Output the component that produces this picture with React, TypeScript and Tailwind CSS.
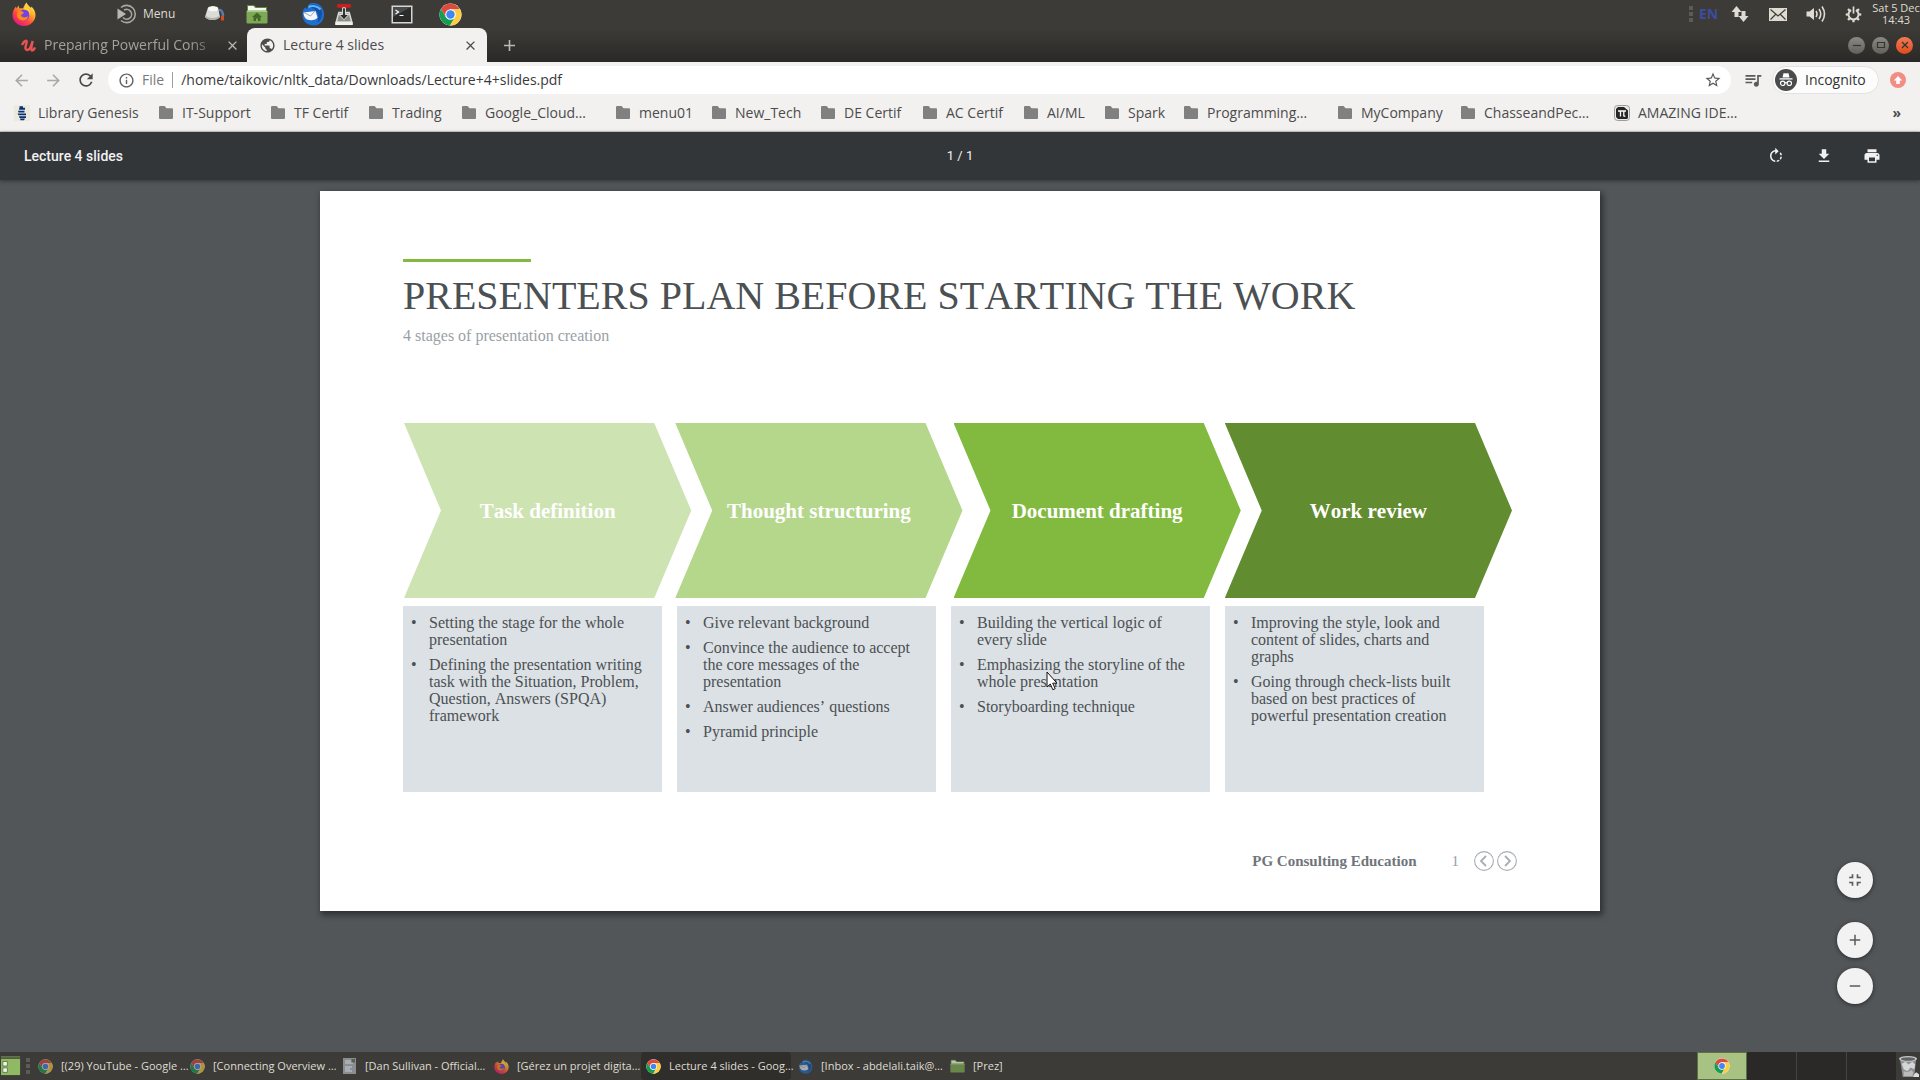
import React, { useId } from "react";
import {
  MdArrowBack,
  MdArrowForward,
  MdRefresh,
  MdInfoOutline,
  MdStarBorder,
  MdQueueMusic,
  MdRotateRight,
  MdFileDownload,
  MdPrint,
  MdFullscreenExit,
  MdAdd,
  MdRemove,
  MdClose,
  MdPublic,
} from "react-icons/md";

type IconProps = { className?: string };

function ChromeLogo({ className }: IconProps) {
  return (
    <svg viewBox="0 0 48 48" className={className} aria-hidden="true">
      <circle cx="24" cy="24" r="23" fill="#fff" />
      <path d="M24 13H43.9A23 23 0 0 0 4.1 12.5L14.5 29.5 24 13Z" fill="#dd4b3e" />
      <path d="M4.1 12.5A23 23 0 0 0 23 47L33.5 29.5 14.5 29.5Z" fill="#179c53" />
      <path d="M43.9 13A23 23 0 0 1 23 47L33.5 29.5 24 13Z" fill="#ffcd42" />
      <circle cx="24" cy="24" r="11" fill="#fff" />
      <circle cx="24" cy="24" r="8.8" fill="#4285f4" />
    </svg>
  );
}

function FirefoxLogo({ className }: IconProps) {
  const id = useId();
  return (
    <svg viewBox="0 0 48 48" className={className} aria-hidden="true">
      <defs>
        <linearGradient id={id} x1="0.85" y1="0.05" x2="0.2" y2="0.95">
          <stop offset="0" stopColor="#fff44f" />
          <stop offset="0.35" stopColor="#ffa92c" />
          <stop offset="0.65" stopColor="#ff4b3a" />
          <stop offset="1" stopColor="#e31587" />
        </linearGradient>
      </defs>
      <path
        d="M29 1c2 5 6 7 9 11l1-3c5 5 8 11 8 17a23 22 0 0 1-46 0C1 19 4 13 8 9l1 4 4-6 2 6c3-1 5 0 7 0 2-4 3-8 7-12Z"
        fill={`url(#${id})`}
      />
      <circle cx="24" cy="26" r="11" fill="#7542e5" />
      <path d="M12 18c5-1 9 1 12 4l-6 4c1 5 8 7 14 2 0 6-5 9-10 9-8 0-13-6-12-13Z" fill="#ff8a16" />
      <path d="M24 15c8-1 13 6 11 14 4-8 1-17-9-20Z" fill="#ffd23a" />
    </svg>
  );
}

function ThunderbirdLogo({ className }: IconProps) {
  return (
    <svg viewBox="0 0 48 48" className={className} aria-hidden="true">
      <path d="M18 3C32-1 46 8 46 25c0 12-8 22-20 22C12 47 2 38 3 24c0-6 2-10 5-13l4 3c1-5 3-9 6-11Z" fill="#1f6fd0" />
      <path d="M20 5c13-2 23 7 22 20-1 8-4 13-9 16 5-14 0-26-13-30Z" fill="#174fa6" />
      <path d="M15 10c8-4 18-2 24 5" stroke="#5bb4f5" strokeWidth="4" fill="none" />
      <path d="M5 21 29 18l4 13c-3 5-12 7-21 4C7 32 5 27 5 21Z" fill="#f4f6fa" />
      <path d="m6 21 13 7 9-10" stroke="#9aa8bb" strokeWidth="2" fill="none" />
    </svg>
  );
}

function GreenFolder({ className, home }: IconProps & { home?: boolean }) {
  return (
    <svg viewBox="0 0 22 20" className={className} aria-hidden="true">
      <path d="M1 1h7l2 2h11v5H1Z" fill="#5e8a37" />
      <path d="M2 2h5.500l2 2H20v4H2Z" fill="#f6f7f2" />
      <rect x="0.500" y="6.500" width="21" height="13" rx="1" fill="#7da854" />
      <path d="M1 7.500h20" stroke="#a9cc84" />
      {home && <path d="m11 8.500 5 4.500h-1.500v4h-2.500v-2.500h-2V17H7.500v-4H6Z" fill="#44682a" />}
    </svg>
  );
}

function PlainFolder({ className }: IconProps) {
  return (
    <svg viewBox="0 0 14 13" className={className} aria-hidden="true">
      <path d="M1 0h4.600L7.500 2.200H13a1 1 0 0 1 1 1V12a1 1 0 0 1-1 1H1a1 1 0 0 1-1-1V1a1 1 0 0 1 1-1Z" fill="#808080" />
    </svg>
  );
}

function MenuLogo() {
  return (
    <svg viewBox="0 0 20 20" className="size-5" fill="none" stroke="#a9a7a2" strokeWidth="1.6" aria-hidden="true">
      <path d="M4 3.500A8.600 8.600 0 1 1 4 16.500" />
      <path d="M7 6.200A4.900 4.900 0 1 1 6 13.500" />
      <path d="M0.500 4.500 9 10l-8.500 5.500Z" fill="#b9b7b2" stroke="none" />
    </svg>
  );
}

function CupIcon() {
  return (
    <svg viewBox="0 0 22 18" className="h-[18px] w-[22px]" aria-hidden="true">
      <path d="M14 6c4-3 6 1 6 5" stroke="#5b7ba5" strokeWidth="2.500" fill="none" />
      <rect x="18" y="11" width="3" height="4.500" fill="#d84a26" />
      <path d="M5 2.500c3-2 7-2 10 0l2 9.500c-3 4-12 4-15 0Z" fill="#dcdcd6" />
      <ellipse cx="10" cy="4" rx="5" ry="2.300" fill="#f8f8f4" />
      <path d="M2 12c3 4 12 4 15 0l-1-1c-3 2.500-10 2.500-13 0Z" fill="#b0b0aa" />
    </svg>
  );
}

function InstallIcon() {
  return (
    <svg viewBox="0 0 20 24" className="h-[23px] w-5" aria-hidden="true">
      <path d="M4 9h12l3 11v3H1v-3Z" fill="#d9d9d6" />
      <path d="M5 11h10l2 8H3Z" fill="#8d8d8a" />
      <rect x="2.500" y="1" width="15" height="4" rx="1.500" fill="#c8201e" />
      <path d="M8.500 5h3v7H15l-5 5.500L5 12h3.500Z" fill="#2c2c2c" stroke="#f2f2f0" strokeWidth="0.900" />
      <path d="M1 20h18v3H1Z" fill="#efefec" />
    </svg>
  );
}

function TerminalIcon() {
  return (
    <svg viewBox="0 0 22 19" className="h-[19px] w-[22px]" aria-hidden="true">
      <rect x="0.500" y="0.500" width="21" height="18" fill="#d6d6d2" />
      <rect x="2" y="2" width="18" height="15" fill="#2a2c2c" />
      <path d="M2 2h18L2 12Z" fill="#4a4c4c" />
      <path d="m4.500 5 3 2-3 2M8.500 10.500h4" stroke="#fff" strokeWidth="1.200" fill="none" />
    </svg>
  );
}

function UdemyLogo() {
  return (
    <svg viewBox="0 0 16 14" className="h-[13px] w-[15px]" fill="none" stroke="#ea5252" strokeWidth="2.600" strokeLinecap="round" aria-hidden="true">
      <path d="M1.500 5.500C3.500 2 6.500 0.500 6 3.500L4.800 8.500C4 12.500 8.500 13.500 10.500 8L12.500 2.200C11 8.500 10.500 12.500 12 12.300 13.200 12.100 14 11 14.600 10" />
    </svg>
  );
}

function BookIcon() {
  return (
    <svg viewBox="0 0 16 16" className="size-4" aria-hidden="true">
      <rect width="16" height="16" fill="#ebebdd" />
      <path
        d="M5.500 1.200h3.500v1.600h2v2H5V3.400h.5ZM4 5.800h6.500v1.700H4.500ZM3.500 8.400h8.500v1.900H4.500ZM5 11.200h7v1.700H5.500ZM6 13.600h5l-1 1.700H6.500Z"
        fill="#0c2f73"
      />
    </svg>
  );
}

function PiIcon() {
  return (
    <svg viewBox="0 0 16 16" className="size-4" aria-hidden="true">
      <rect x="0.500" y="0.500" width="15" height="15" rx="3" fill="#e9e9e9" stroke="#9c9c9c" />
      <path d="M4 2h6l4 3.500V13l-1 1H4l-2-2V4Z" fill="#262626" />
      <path d="M4 6h8M6.500 6v5.500M9.800 6v5l1.500.4" stroke="#fff" strokeWidth="1.300" fill="none" />
    </svg>
  );
}

function IncognitoIcon() {
  return (
    <svg viewBox="0 0 22 22" className="size-[22px]" aria-hidden="true">
      <circle cx="11" cy="11" r="11" fill="#4a4b4d" />
      <path d="M7.500 8.500 8.500 4.200h1.700l.8.400.8-.4h1.700l1 4.300Z" fill="#fff" />
      <path d="M4.500 9.900h13" stroke="#fff" strokeWidth="1.300" />
      <g fill="none" stroke="#fff" strokeWidth="1.200">
        <circle cx="7.700" cy="14.300" r="2.200" />
        <circle cx="14.300" cy="14.300" r="2.200" />
        <path d="M9.900 14q1.100-.7 2.200 0" />
      </g>
    </svg>
  );
}

function NetworkIcon() {
  return (
    <svg viewBox="0 0 18 18" className="size-[18px]" fill="#dfdbd2" aria-hidden="true">
      <path d="M5.500 1 10.500 7H7.500v5h-4V7H.5ZM12.500 17 7.500 11h3V6h4v5h3Z" />
    </svg>
  );
}

function MailIcon() {
  return (
    <svg viewBox="0 0 18 13" className="h-[13px] w-[18px]" aria-hidden="true">
      <rect width="18" height="13" fill="#dfdbd2" />
      <path d="M1.500 1.500 9 8l7.500-6.500M1.500 11.500 6.500 6.500M16.500 11.500l-5-5" stroke="#3c3b37" strokeWidth="1.200" fill="none" />
    </svg>
  );
}

function VolumeIcon() {
  return (
    <svg viewBox="0 0 20 18" className="h-[18px] w-5" fill="none" stroke="#dfdbd2" strokeWidth="1.600" aria-hidden="true">
      <path d="M0.500 6.500h3L8 3v12l-4.500-3.500h-3Z" fill="#dfdbd2" stroke="none" />
      <path d="M10 6q2 3 0 6M13 4q3.500 5 0 10M16 1.500q5 7.500 0 15" />
    </svg>
  );
}

function SessionIcon() {
  const teeth = [45, 90, 135, 180, 225, 270, 315];
  return (
    <svg viewBox="0 0 18 18" className="size-[17px]" fill="none" stroke="#dfdbd2" aria-hidden="true">
      <path d="M6.500 4.300A5.300 5.300 0 1 0 11.500 4.300" strokeWidth="2" />
      {teeth.map((a) => (
        <path key={a} d="M9 0.800v2.700" strokeWidth="2.400" transform={`rotate(${a} 9 9)`} />
      ))}
      <path d="M9 0.500v7.500" strokeWidth="1.800" />
    </svg>
  );
}

function TrashIcon() {
  return (
    <svg viewBox="0 0 22 24" className="h-[23px] w-[21px]" aria-hidden="true">
      <path d="M2 4h17l-2 19H5Z" fill="#8e9092" />
      <ellipse cx="10.500" cy="4" rx="9.500" ry="3" fill="#c3c5c7" />
      <ellipse cx="10.500" cy="4.200" rx="7.500" ry="1.800" fill="#606264" />
      <path d="m4 9 4-2 3 3 4-3 3 3-1 5-4-2-3 4-4-2Z" fill="#d5d6d7" />
      <path d="m6 17 4 1 4-2 2 2-1 4H6Z" fill="#b9bbbc" />
      <path d="m17 20 2-2 3 2v3h-6Z" fill="#dedede" />
    </svg>
  );
}

function DocIcon({ className }: IconProps) {
  return (
    <svg viewBox="0 0 14 16" className={className} aria-hidden="true">
      <rect x="0.500" width="13" height="16" fill="#8b8d90" />
      <path d="M2.500 3h6M2.500 5h8M2.500 9h7M2.500 11h5M2.500 13h7" stroke="#c6cdd8" />
      <rect x="9" y="1" width="3.500" height="3.500" fill="#5c5f50" />
    </svg>
  );
}

function Grip() {
  return (
    <div className="flex flex-col gap-[2px]">
      <span className="size-1 bg-[#5c5b57]" />
      <span className="size-1 bg-[#5c5b57]" />
      <span className="size-1 bg-[#5c5b57]" />
    </div>
  );
}

function TopPanel() {
  return (
    <header className="flex h-7 items-center justify-between bg-[#3c3b37] pl-3 text-[#dfdbd2]">
      <div className="flex items-center">
        <button aria-label="Firefox" className="w-[105px]">
          <FirefoxLogo className="size-6" />
        </button>
        <button className="flex w-[86px] items-center gap-1.5 text-xs">
          <MenuLogo />
          Menu
        </button>
        <button aria-label="Coffee" className="w-[43px]">
          <CupIcon />
        </button>
        <button aria-label="Home folder" className="w-[55px]">
          <GreenFolder home className="h-5 w-[22px]" />
        </button>
        <button aria-label="Mail" className="w-[33px]">
          <ThunderbirdLogo className="size-6" />
        </button>
        <button aria-label="Install software" className="w-[57px]">
          <InstallIcon />
        </button>
        <button aria-label="Terminal" className="w-12">
          <TerminalIcon />
        </button>
        <button aria-label="Chrome">
          <ChromeLogo className="size-[23px]" />
        </button>
      </div>
      <div className="flex items-center">
        <Grip />
        <span className="ml-1.5 w-8 text-sm font-bold text-[#3f4ba0]">EN</span>
        <button aria-label="Network" className="w-[38px]">
          <NetworkIcon />
        </button>
        <button aria-label="Messages" className="w-[37px]">
          <MailIcon />
        </button>
        <button aria-label="Sound" className="w-[39px]">
          <VolumeIcon />
        </button>
        <button aria-label="Session" className="w-[27px]">
          <SessionIcon />
        </button>
        <div className="w-12 text-center text-[11px] leading-3 whitespace-nowrap">
          Sat 5 Dec
          <br />
          14:43
        </div>
      </div>
    </header>
  );
}

function WindowButton({ label, close, children }: { label: string; close?: boolean; children: React.ReactNode }) {
  return (
    <button
      aria-label={label}
      className={
        close
          ? "flex size-[17px] items-center justify-center rounded-full bg-linear-to-b from-[#f27b56] to-[#df4a16]"
          : "flex size-[17px] items-center justify-center rounded-full bg-linear-to-b from-[#8b8983] to-[#62615c]"
      }
    >
      <svg viewBox="0 0 10 10" className="size-2.5" fill="none" stroke="#35342f" strokeWidth="1.200" aria-hidden="true">
        {children}
      </svg>
    </button>
  );
}

function TabStrip() {
  return (
    <div className="flex h-[34px] items-stretch bg-linear-to-b from-[#3c3b37] to-[#2a2927]">
      <div className="flex w-[247px] items-center pl-[21px] text-sm text-[#a5a29b]">
        <UdemyLogo />
        <button className="ml-2 w-[181px] mask-r-from-80% text-left whitespace-nowrap">
          Preparing Powerful Cons
        </button>
        <button aria-label="Close tab">
          <MdClose className="size-[15px] text-[#bcb9b2]" />
        </button>
      </div>
      <div className="flex w-60 items-center rounded-t-lg bg-[#f2f1f0] pl-3 text-sm text-[#4c4c4c]">
        <MdPublic className="size-[17px]" />
        <button className="ml-[7px] w-[180px] text-left">Lecture 4 slides</button>
        <button aria-label="Close tab">
          <MdClose className="size-[15px]" />
        </button>
      </div>
      <button aria-label="New tab" className="ml-[13px]">
        <MdAdd className="size-[19px] text-[#bcb9b2]" />
      </button>
      <div className="ml-auto flex items-center gap-[7px] pr-[7px]">
        <WindowButton label="Minimise">
          <path d="M1 5.500h8" />
        </WindowButton>
        <WindowButton label="Maximise">
          <path d="M1.500 2.500h7v5h-7Z" />
        </WindowButton>
        <WindowButton label="Close" close>
          <path d="m2 2 6 6M8 2 2 8" />
        </WindowButton>
      </div>
    </div>
  );
}

function AddressBar() {
  return (
    <div className="flex h-9 items-center bg-[#f2f1f0] pr-[14px] pl-3">
      <button aria-label="Back" className="w-8">
        <MdArrowBack className="size-[19px] text-[#a9a9a9]" />
      </button>
      <button aria-label="Forward" className="w-8">
        <MdArrowForward className="size-[19px] text-[#a9a9a9]" />
      </button>
      <button aria-label="Reload" className="w-8">
        <MdRefresh className="size-5 text-[#4a4a4a]" />
      </button>
      <div className="flex h-7 flex-1 items-center rounded-full bg-white pr-[9px] pl-2.5">
        <MdInfoOutline className="size-[17px] text-[#5f5f5f]" />
        <label htmlFor="address" className="ml-[7px] text-sm text-[#7a7a7a]">
          File
        </label>
        <span className="mx-2 h-4 w-px bg-[#a0a0a0]" />
        <input
          id="address"
          className="flex-1 bg-transparent text-sm text-[#3a3a3a] outline-none"
          defaultValue="/home/taikovic/nltk_data/Downloads/Lecture+4+slides.pdf"
        />
        <button aria-label="Bookmark this page">
          <MdStarBorder className="size-[18px] text-[#5a5a5a]" />
        </button>
      </div>
      <button aria-label="Media controls" className="ml-3 w-[29px]">
        <MdQueueMusic className="size-5 text-[#5a5a5a]" />
      </button>
      <button className="flex h-7 w-[107px] items-center gap-2 rounded-full border border-[#e2e2e2] bg-[#fcfcfc] pl-[2px] text-sm text-[#333]">
        <IncognitoIcon />
        Incognito
      </button>
      <button aria-label="Update" className="ml-[11px]">
        <svg viewBox="0 0 16 16" className="size-4" aria-hidden="true">
          <circle cx="8" cy="8" r="8" fill="#f38d83" />
          <path d="m8 4 4.200 4.500H9.800V12H6.200V8.500H3.800Z" fill="#fff" />
        </svg>
      </button>
    </div>
  );
}

const bookmarks: { label: string; width: string; icon?: "book" | "pi" }[] = [
  { label: "Library Genesis", width: "w-[145px]", icon: "book" },
  { label: "IT-Support", width: "w-[112px]" },
  { label: "TF Certif", width: "w-[98px]" },
  { label: "Trading", width: "w-[93px]" },
  { label: "Google_Cloud…", width: "w-[154px]" },
  { label: "menu01", width: "w-[96px]" },
  { label: "New_Tech", width: "w-[109px]" },
  { label: "DE Certif", width: "w-[102px]" },
  { label: "AC Certif", width: "w-[101px]" },
  { label: "AI/ML", width: "w-[81px]" },
  { label: "Spark", width: "w-[79px]" },
  { label: "Programming…", width: "w-[154px]" },
  { label: "MyCompany", width: "w-[123px]" },
  { label: "ChasseandPec…", width: "w-[153px]" },
  { label: "AMAZING IDE…", width: "w-[150px]", icon: "pi" },
];

function BookmarkBar() {
  return (
    <nav className="flex h-[34px] items-center border-b border-[#c9cecb] bg-[#f2f1f0] pr-[19px] pb-1 pl-[14px] text-sm text-[#4c4c4c]">
      {bookmarks.map((b) => (
        <a key={b.label} href="#" className={`${b.width} flex items-center gap-2 whitespace-nowrap`}>
          {b.icon === "book" && <BookIcon />}
          {b.icon === "pi" && <PiIcon />}
          {!b.icon && <PlainFolder className="mr-px h-[13px] w-[14px] shrink-0" />}
          {b.label}
        </a>
      ))}
      <button aria-label="More bookmarks" className="ml-auto font-bold">
        »
      </button>
    </nav>
  );
}

function PdfToolbar() {
  return (
    <div className="z-10 grid h-12 grid-cols-3 items-center bg-[#323639] px-6 font-[Roboto,sans-serif] text-sm font-medium text-[#f1f1f1] shadow-[0_1px_4px_rgba(0,0,0,0.4)]">
      <span>Lecture 4 slides</span>
      <span className="text-center text-[13px] font-normal">1 / 1</span>
      <div className="flex justify-end gap-[30px] pr-[15px]">
        <button aria-label="Rotate clockwise">
          <MdRotateRight className="size-[18px]" />
        </button>
        <button aria-label="Download">
          <MdFileDownload className="size-[18px]" />
        </button>
        <button aria-label="Print">
          <MdPrint className="size-[18px]" />
        </button>
      </div>
    </div>
  );
}

const stages = [
  { title: "Task definition", look: "bg-[#cde4b2]" },
  { title: "Thought structuring", look: "-ml-4 bg-[#b4d78c]" },
  { title: "Document drafting", look: "-ml-[9px] bg-[#82ba40]" },
  { title: "Work review", look: "-ml-4 bg-[#628c30]" },
];

const details = [
  [
    "Setting the stage for the whole presentation",
    "Defining the presentation writing task with the Situation, Problem, Question, Answers (SPQA) framework",
  ],
  [
    "Give relevant background",
    "Convince the audience to accept the core messages of the presentation",
    "Answer audiences’ questions",
    "Pyramid principle",
  ],
  [
    "Building the vertical logic of every slide",
    "Emphasizing the storyline of the whole presentation",
    "Storyboarding technique",
  ],
  [
    "Improving the style, look and content of slides, charts and graphs",
    "Going through check-lists built based on best practices of powerful presentation creation",
  ],
];

function PageArrow({ label, d }: { label: string; d: string }) {
  return (
    <button aria-label={label}>
      <svg viewBox="0 0 20 20" className="size-5" fill="none" stroke="#a9adb3" aria-hidden="true">
        <circle cx="10" cy="10" r="9.400" strokeWidth="1.100" />
        <path d={d} strokeWidth="1.800" />
      </svg>
    </button>
  );
}

function Slide() {
  return (
    <article className="relative w-full max-w-[1280px] bg-white pt-[68px] pb-[38px] pl-[83px] font-['Liberation_Serif',serif] text-[#4b5053] shadow-[2px_3px_6px_1px_rgba(0,0,0,0.45)] [font-kerning:none]">
      <div className="h-[3px] w-32 bg-[#82ba40]" />
      <h1 className="mt-[10px] text-[40px] leading-[48px]">PRESENTERS PLAN BEFORE STARTING THE WORK</h1>
      <p className="mt-1 text-base leading-6 text-[#9a9fa5]">4 stages of presentation creation</p>

      <div className="mt-[75px] mr-[88px] ml-px flex h-[175px]">
        {stages.map((s) => (
          <h2
            key={s.title}
            className={`${s.look} flex flex-1 items-center justify-center pt-[2px] text-[21px] font-bold text-white [clip-path:polygon(0_0,calc(100%-37px)_0,100%_50%,calc(100%-37px)_100%,0_100%,37px_50%)]`}
          >
            {s.title}
          </h2>
        ))}
      </div>

      <div className="mt-2 mr-[116px] grid min-h-[186px] grid-cols-4 gap-[15px]">
        {details.map((items) => (
          <ul key={items[0]} className="flex flex-col gap-2 bg-[#dce1e5] pt-2 pr-5 pl-2 text-base leading-[17px]">
            {items.map((t) => (
              <li key={t} className="flex">
                <span className="w-[18px] shrink-0">•</span>
                <span>{t}</span>
              </li>
            ))}
          </ul>
        ))}
      </div>

      <footer className="mt-[57px] mr-[83px] flex h-6 items-center justify-end">
        <span className="text-[15px] font-bold text-[#6f757b]">PG Consulting Education</span>
        <span className="mr-[15px] ml-[35px] text-[15px] text-[#9a9fa5]">1</span>
        <div className="flex gap-[3px]">
          <PageArrow label="Previous slide" d="M12 5 7 10l5 5" />
          <PageArrow label="Next slide" d="m8 5 5 5-5 5" />
        </div>
      </footer>

      <svg viewBox="0 0 12 20" className="absolute top-[480px] left-[726px] h-5 w-3" aria-hidden="true">
        <path d="M1 1v15l3.300-3 2.500 5.700 2.400-1-2.500-5.500H11Z" fill="#fff" stroke="#111" strokeWidth="1" />
      </svg>
    </article>
  );
}

function ZoomButton({ label, children }: { label: string; children: React.ReactNode }) {
  return (
    <button
      aria-label={label}
      className="flex size-9 items-center justify-center rounded-full bg-[#f2f2f2] text-[#5a5a5a] shadow-[0_1px_4px_rgba(0,0,0,0.5)]"
    >
      {children}
    </button>
  );
}

const tasks: { label: string; icon: React.ReactNode; active?: boolean }[] = [
  { label: "[(29) YouTube - Google …", icon: <ChromeLogo className="size-[15px] shrink-0 opacity-60" /> },
  { label: "[Connecting Overview …", icon: <ChromeLogo className="size-[15px] shrink-0 opacity-60" /> },
  { label: "[Dan Sullivan - Official…", icon: <DocIcon className="h-4 w-[15px] shrink-0" /> },
  { label: "[Gérez un projet digita…", icon: <FirefoxLogo className="size-[15px] shrink-0 opacity-70" /> },
  { label: "Lecture 4 slides - Goog…", icon: <ChromeLogo className="size-[15px] shrink-0" />, active: true },
  { label: "[Inbox - abdelali.taik@…", icon: <ThunderbirdLogo className="size-[15px] shrink-0 opacity-60" /> },
  { label: "[Prez]", icon: <GreenFolder className="h-[14px] w-[15px] shrink-0 opacity-70" /> },
];

function TaskBar() {
  return (
    <footer className="flex h-7 items-center bg-[#3c3b37] text-[#dfdbd2]">
      <button aria-label="Show desktop" className="mr-1 w-[22px]">
        <svg viewBox="0 0 22 22" className="h-5 w-[22px]" aria-hidden="true">
          <path d="M0 1h21" stroke="#6d8453" strokeWidth="1.500" />
          <rect y="3" width="21" height="18" fill="#8fb963" />
          <path d="M2 6h5v5H2ZM2 13h5v5H2Z" fill="#f4f6ee" stroke="#5d7a40" />
        </svg>
      </button>
      <Grip />
      <div className="ml-[3px] flex h-full items-stretch gap-[2px]">
        {tasks.map((t) => (
          <button
            key={t.label}
            className={
              t.active
                ? "flex w-[150px] items-center gap-2 rounded-sm bg-[#2f2e2b] pl-[5px] text-[11px] whitespace-nowrap"
                : "flex w-[150px] items-center gap-2 pl-[5px] text-[11px] whitespace-nowrap"
            }
          >
            {t.icon}
            {t.label}
          </button>
        ))}
      </div>
      <div className="ml-auto flex h-full">
        <button
          aria-label="Workspace 1"
          className="flex w-[50px] items-center justify-center border border-[#5d6f45] bg-[#a7c283]"
        >
          <ChromeLogo className="size-4" />
        </button>
        <button aria-label="Workspace 2" className="w-[50px] border-r border-[#454440] bg-[#2a2927]" />
        <button aria-label="Workspace 3" className="w-[50px] border-r border-[#454440] bg-[#2a2927]" />
        <button aria-label="Workspace 4" className="w-[49px] bg-[#2a2927]" />
        <button aria-label="Trash" className="flex w-6 items-center justify-center">
          <TrashIcon />
        </button>
      </div>
    </footer>
  );
}

export default function App() {
  return (
    <div className="flex min-h-screen flex-col bg-[#525659] font-['Open_Sans','Noto_Sans',sans-serif]">
      <TopPanel />
      <TabStrip />
      <AddressBar />
      <BookmarkBar />
      <PdfToolbar />
      <main className="relative flex flex-1 items-start justify-center pt-[11px]">
        <Slide />
        <div className="absolute right-[47px] bottom-12 flex flex-col">
          <ZoomButton label="Fit to page">
            <MdFullscreenExit className="size-5" />
          </ZoomButton>
          <div className="mt-6 flex flex-col gap-2.5">
            <ZoomButton label="Zoom in">
              <MdAdd className="size-[18px]" />
            </ZoomButton>
            <ZoomButton label="Zoom out">
              <MdRemove className="size-[18px]" />
            </ZoomButton>
          </div>
        </div>
      </main>
      <TaskBar />
    </div>
  );
}
